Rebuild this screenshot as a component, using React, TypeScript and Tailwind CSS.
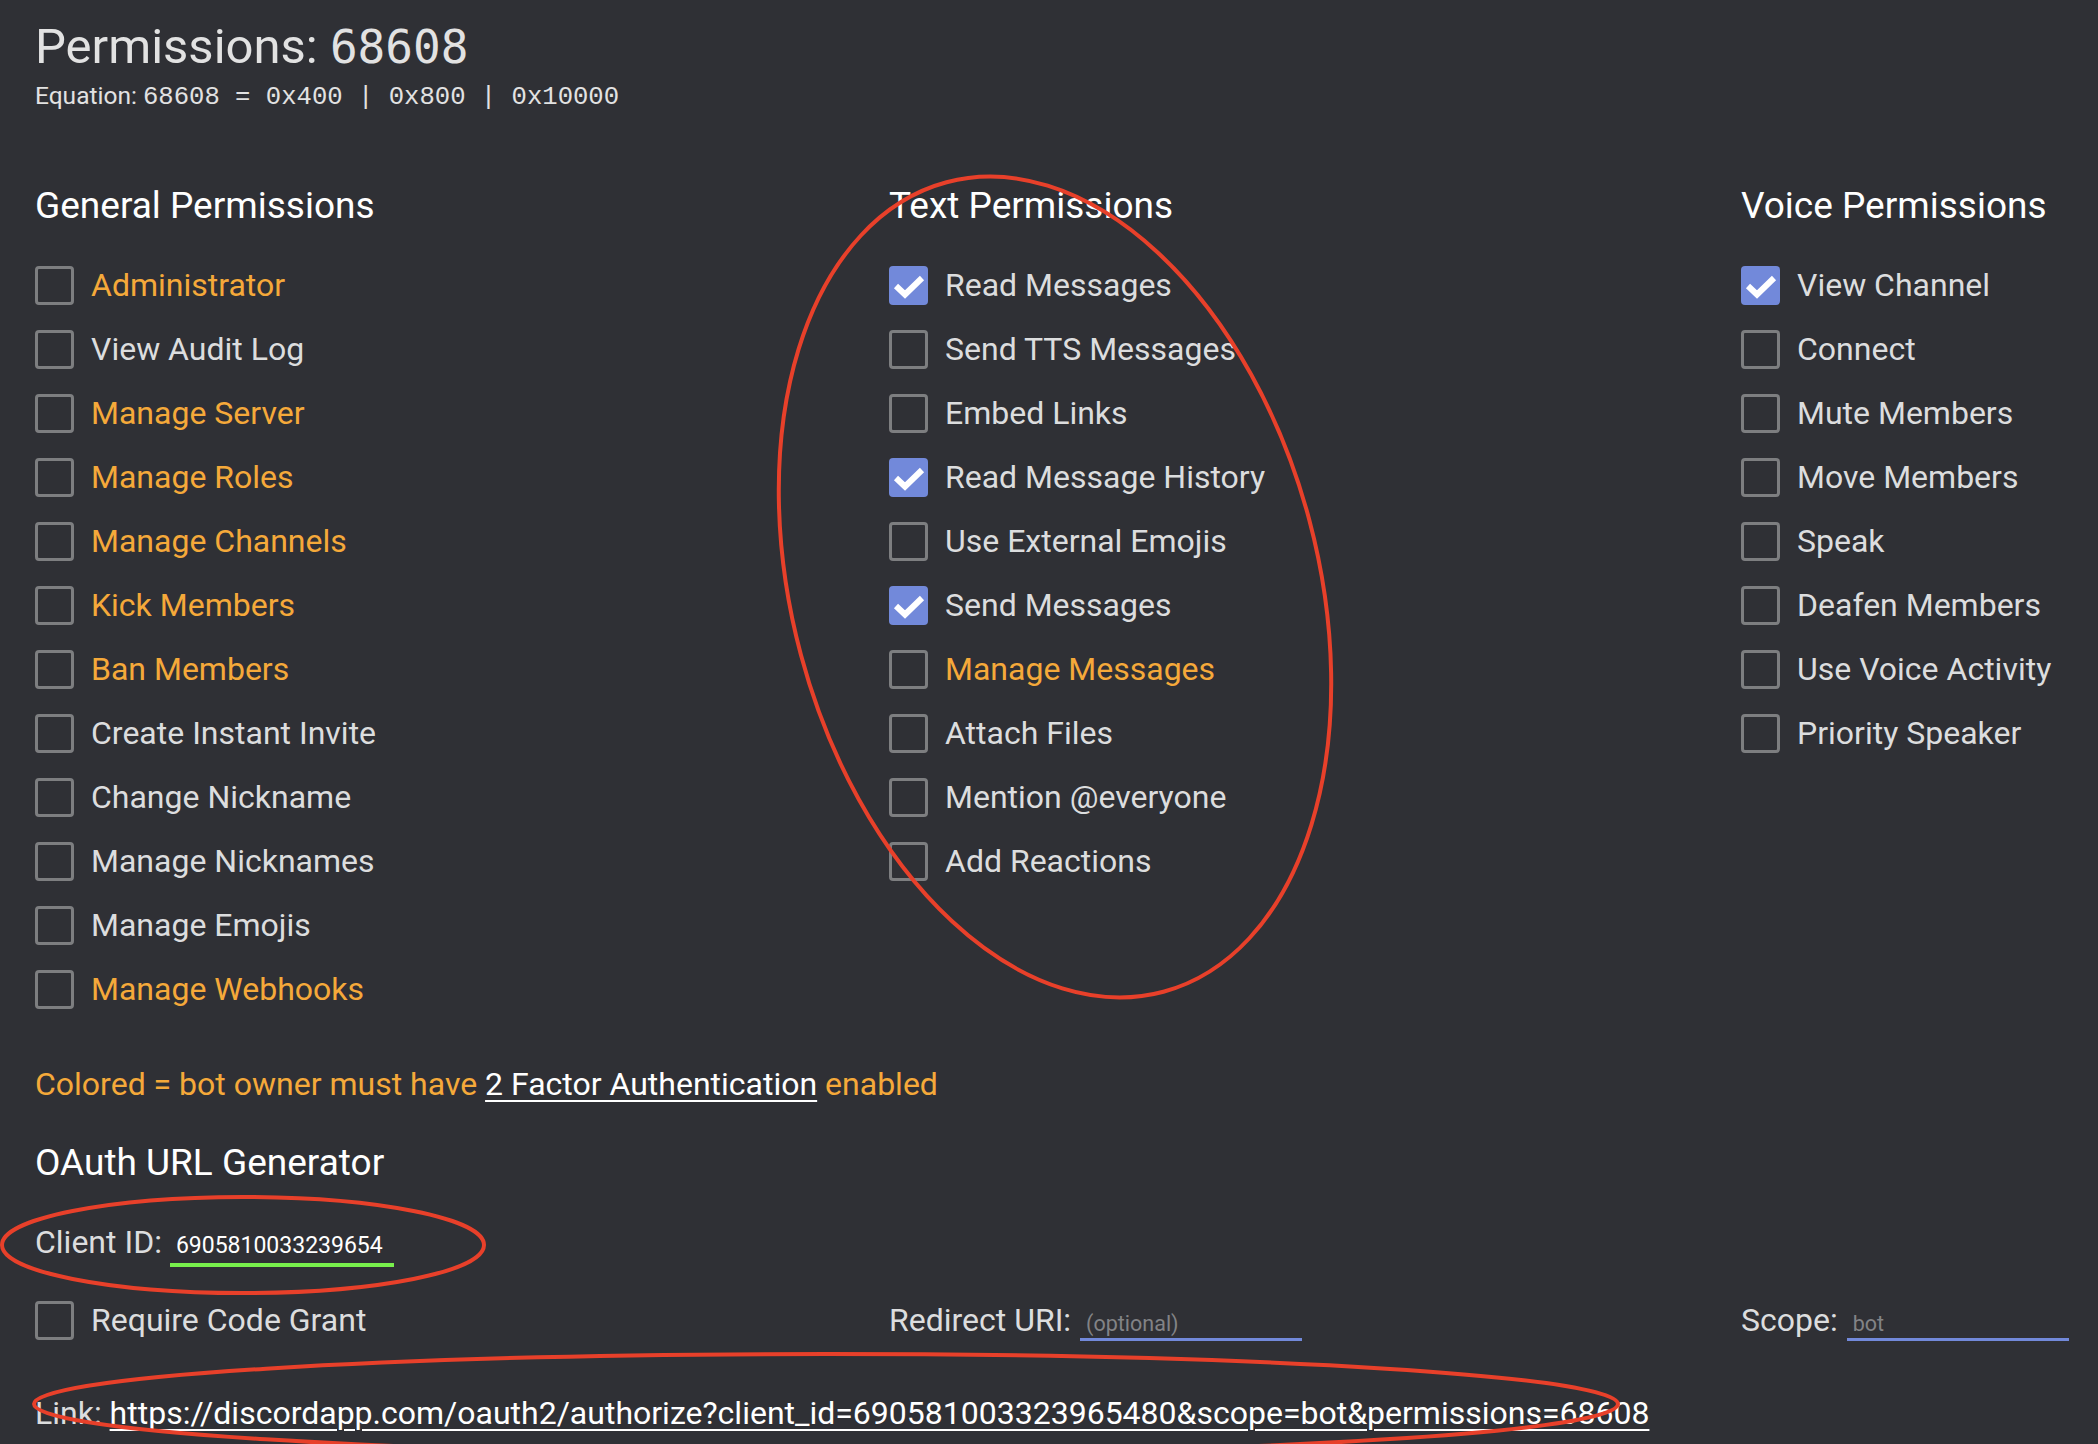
import React from "react";

type Perm = { label: string; warn?: boolean; checked?: boolean };

const general: Perm[] = [
	{ label: "Administrator", warn: true },
	{ label: "View Audit Log" },
	{ label: "Manage Server", warn: true },
	{ label: "Manage Roles", warn: true },
	{ label: "Manage Channels", warn: true },
	{ label: "Kick Members", warn: true },
	{ label: "Ban Members", warn: true },
	{ label: "Create Instant Invite" },
	{ label: "Change Nickname" },
	{ label: "Manage Nicknames" },
	{ label: "Manage Emojis" },
	{ label: "Manage Webhooks", warn: true },
];

const text: Perm[] = [
	{ label: "Read Messages", checked: true },
	{ label: "Send TTS Messages" },
	{ label: "Embed Links" },
	{ label: "Read Message History", checked: true },
	{ label: "Use External Emojis" },
	{ label: "Send Messages", checked: true },
	{ label: "Manage Messages", warn: true },
	{ label: "Attach Files" },
	{ label: "Mention @everyone" },
	{ label: "Add Reactions" },
];

const voice: Perm[] = [
	{ label: "View Channel", checked: true },
	{ label: "Connect" },
	{ label: "Mute Members" },
	{ label: "Move Members" },
	{ label: "Speak" },
	{ label: "Deafen Members" },
	{ label: "Use Voice Activity" },
	{ label: "Priority Speaker" },
];

function Checkbox({ checked }: { checked?: boolean }) {
	if (checked) {
		return (
			<span className="w-[39px] h-[39px] shrink-0 rounded-[4px] bg-[#7289da] flex items-center justify-center">
				<svg width="39" height="39" viewBox="0 0 39 39">
					<polyline points="7,20 16,28.5 33,12" fill="none" stroke="#fff" strokeWidth="6" strokeLinejoin="miter" />
				</svg>
			</span>
		);
	}
	return <span className="w-[39px] h-[39px] shrink-0 rounded-[4px] border-[3px] border-[#7d7e80]" />;
}

function Row({ p }: { p: Perm }) {
	return (
		<div className="h-[64px] flex items-center gap-[17px]">
			<Checkbox checked={p.checked} />
			<span className={`text-[32px] leading-[40px] whitespace-nowrap ${p.warn ? "text-[#f5a93a]" : "text-[#dcddde]"}`}>{p.label}</span>
		</div>
	);
}

function Column({ title, items }: { title: string; items: Perm[] }) {
	return (
		<div className="flex flex-col">
			<h2 className="text-[37px] leading-[44px] text-white whitespace-nowrap">{title}</h2>
			<div className="mt-[25px] flex flex-col">
				{items.map((p) => (
					<Row key={p.label} p={p} />
				))}
			</div>
		</div>
	);
}

function Field({ label, placeholder }: { label: string; placeholder: string }) {
	return (
		<div className="flex items-baseline gap-[9px]">
			<span className="text-[32px] leading-[40px] text-[#dcddde] whitespace-nowrap">{label}</span>
			<div className="w-[222px] border-b-[3px] border-[#7289da] pl-[6px] pb-[2px] text-[21.5px] leading-[24px] text-[#828386]">{placeholder}</div>
		</div>
	);
}

export default function App() {
	return (
		<div className="relative min-h-screen w-full overflow-hidden bg-[#2f3035] font-['Roboto','Liberation_Sans',sans-serif]">
			<div className="pl-[35px] pt-[23px]">
				<h1 className="text-[49px] leading-[48px] text-[#e2e2e2] whitespace-nowrap">
					Permissions: <span className="font-['DejaVu_Sans_Mono',monospace] text-[46px] leading-[48px]">68608</span>
				</h1>
				<p className="mt-[10px] text-[24.5px] leading-[30px] text-[#e2e2e2] whitespace-nowrap">
					Equation: <span className="font-['Liberation_Mono',monospace] text-[25.6px] leading-[30px] whitespace-pre">68608 = 0x400 | 0x800 | 0x10000</span>
				</p>

				<div className="mt-[71px] grid grid-cols-[854px_852px_1fr]">
					<Column title="General Permissions" items={general} />
					<Column title="Text Permissions" items={text} />
					<Column title="Voice Permissions" items={voice} />
				</div>

				<p className="mt-[43px] text-[32px] leading-[40px] text-[#f5a93a] whitespace-nowrap">
					Colored = bot owner must have <span className="text-white underline underline-offset-[5px] decoration-2">2 Factor Authentication</span> enabled
				</p>

				<h2 className="mt-[37px] text-[37px] leading-[44px] text-white">OAuth URL Generator</h2>

				<div className="mt-[37px] flex items-baseline gap-[8px]">
					<span className="text-[32px] leading-[40px] text-[#dcddde]">Client ID:</span>
					<div className="w-[224px] border-b-4 border-[#78f04c] pl-[6px] pb-[4px] text-[23px] leading-[26px] text-white">6905810033239654</div>
				</div>

				<div className="mt-[33px] grid grid-cols-[854px_852px_1fr] items-start">
					<div className="h-[40px] flex items-center gap-[17px]">
						<Checkbox />
						<span className="text-[32px] leading-[40px] text-[#dcddde]">Require Code Grant</span>
					</div>
					<Field label="Redirect URI:" placeholder="(optional)" />
					<Field label="Scope:" placeholder="bot" />
				</div>

				<p className="mt-[52px] text-[32px] leading-[40px] text-[#dcddde] whitespace-nowrap">
					Link:{" "}
					<span className="text-white underline underline-offset-[5px] decoration-2">
						https://discordapp.com/oauth2/authorize?client_id=690581003323965480&amp;scope=bot&amp;permissions=68608
					</span>
				</p>
			</div>

			{/* red annotation marks */}
			<svg className="absolute inset-0 pointer-events-none" width="2098" height="1444" viewBox="0 0 2098 1444">
				<g fill="none" stroke="#e8402a" strokeWidth="4">
					<ellipse cx="1055" cy="587" rx="263" ry="419" transform="rotate(-15 1055 587)" />
					<ellipse cx="243" cy="1245" rx="241" ry="48" />
					<ellipse cx="826" cy="1404" rx="792" ry="50" />
				</g>
			</svg>
		</div>
	);
}
